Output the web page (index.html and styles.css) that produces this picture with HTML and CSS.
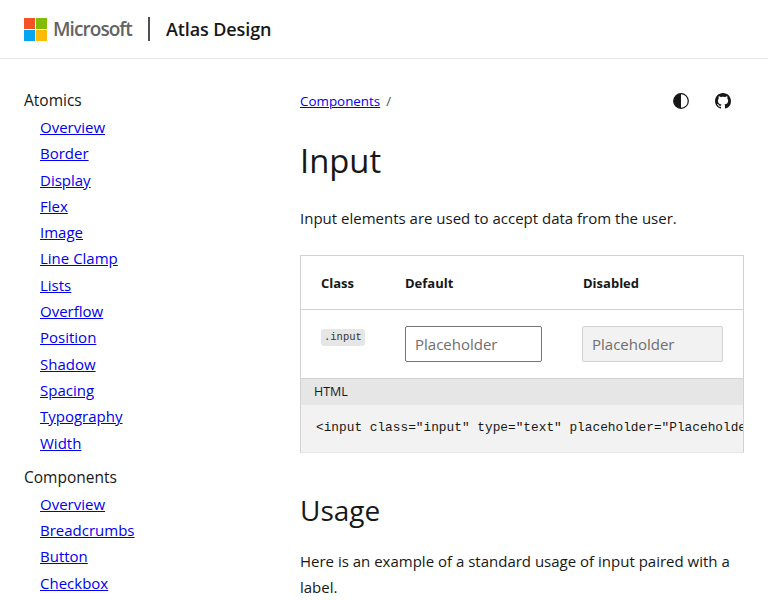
FILE: index.html
```html
<!DOCTYPE html>
<html>
<head>
    <meta charset="UTF-8">
    <title>Input - Atlas Design</title>
    <link rel="stylesheet" href="styles.css">
</head>
<body>
<header class="topBar">
    <svg class="msLogo" width="23" height="23" viewBox="0 0 23 23">
        <rect x="0" y="0" width="11" height="11" fill="#f35325"/>
        <rect x="12" y="0" width="11" height="11" fill="#81bc06"/>
        <rect x="0" y="12" width="11" height="11" fill="#05a6f0"/>
        <rect x="12" y="12" width="11" height="11" fill="#ffba08"/>
    </svg>
    <span class="msName">Microsoft</span>
    <span class="topDivider"></span>
    <span class="siteName">Atlas Design</span>
</header>
<div class="layout">
    <nav class="sideNav">
        <h4 class="navTitle">Atomics</h4>
        <ul class="navList">
            <li><a href="#">Overview</a></li>
            <li><a href="#">Border</a></li>
            <li><a href="#">Display</a></li>
            <li><a href="#">Flex</a></li>
            <li><a href="#">Image</a></li>
            <li><a href="#">Line Clamp</a></li>
            <li><a href="#">Lists</a></li>
            <li><a href="#">Overflow</a></li>
            <li><a href="#">Position</a></li>
            <li><a href="#">Shadow</a></li>
            <li><a href="#">Spacing</a></li>
            <li><a href="#">Typography</a></li>
            <li><a href="#">Width</a></li>
        </ul>
        <h4 class="navTitle">Components</h4>
        <ul class="navList">
            <li><a href="#">Overview</a></li>
            <li><a href="#">Breadcrumbs</a></li>
            <li><a href="#">Button</a></li>
            <li><a href="#">Checkbox</a></li>
        </ul>
    </nav>
    <main class="content">
        <div class="crumbRow">
            <div class="crumbs"><a href="#">Components</a><span class="crumbSep">/</span></div>
            <div class="crumbIcons">
                <svg width="16" height="16" viewBox="0 0 16 16">
                    <circle cx="8" cy="8" r="7.3" fill="none" stroke="#171717" stroke-width="1.2"/>
                    <path d="M8 0.7a7.3 7.3 0 0 0 0 14.6z" fill="#171717"/>
                </svg>
                <svg width="16" height="16" viewBox="0 0 16 16">
                    <path fill="#171717" d="M8 0C3.58 0 0 3.58 0 8c0 3.54 2.29 6.53 5.47 7.59.4.07.55-.17.55-.38 0-.19-.01-.82-.01-1.49-2.01.37-2.53-.49-2.69-.94-.09-.23-.48-.94-.82-1.13-.28-.15-.68-.52-.01-.53.63-.01 1.08.58 1.23.82.72 1.21 1.87.87 2.33.66.07-.52.28-.87.51-1.07-1.78-.2-3.64-.89-3.64-3.95 0-.87.31-1.59.82-2.15-.08-.2-.36-1.02.08-2.12 0 0 .67-.21 2.2.82.64-.18 1.32-.27 2-.27s1.36.09 2 .27c1.53-1.04 2.2-.82 2.2-.82.44 1.1.16 1.92.08 2.12.51.56.82 1.27.82 2.15 0 3.07-1.87 3.75-3.65 3.95.29.25.54.73.54 1.48 0 1.07-.01 1.93-.01 2.2 0 .21.15.46.55.38A8.01 8.01 0 0 0 16 8c0-4.42-3.58-8-8-8z"/>
                </svg>
            </div>
        </div>
        <h1 class="pageTitle">Input</h1>
        <p class="lead">Input elements are used to accept data from the user.</p>

        <div class="demoBox">
            <table class="demoTable">
                <tr>
                    <th class="colClass">Class</th>
                    <th class="colDefault">Default</th>
                    <th class="colDisabled">Disabled</th>
                </tr>
                <tr>
                    <td><code class="tag">.input</code></td>
                    <td><input class="input inputDefault" type="text" placeholder="Placeholder"></td>
                    <td><input class="input inputDisabled" type="text" placeholder="Placeholder" disabled></td>
                </tr>
            </table>
            <div class="codeHead">HTML</div>
            <pre class="codeBody">&lt;input class="input" type="text" placeholder="Placeholder"&gt;</pre>
        </div>

        <h2 class="subTitle">Usage</h2>
        <p class="lead">Here is an example of a standard usage of input paired with a label.</p>
    </main>
</div>
</body>
</html>
```

FILE: styles.css
```css
html, body {
    height: 600px;
    overflow: hidden;
}

body {
    margin: 0;
    font-family: "Open Sans", "Noto Sans", sans-serif;
    font-size: 15px;
    color: #171717;
    background-color: #fff;
}

a {
    color: #0000ee;
}

.topBar {
    display: flex;
    align-items: center;
    height: 58px;
    padding: 0 24px;
    border-bottom: 1px solid #e6e6e6;
}

.msLogo {
    margin-right: 6px;
}

.msName {
    font-size: 19px;
    font-weight: 600;
    letter-spacing: -0.93px;
    color: #636363;
}

.topDivider {
    width: 2px;
    height: 24px;
    margin: 0 16px;
    background-color: #505050;
}

.siteName {
    font-size: 18px;
    font-weight: 600;
    letter-spacing: -0.1px;
}

.layout {
    display: flex;
    padding: 0 24px;
}

.sideNav {
    flex: 0 0 276px;
    padding-top: 28px;
}

.navTitle {
    margin: 0;
    font-size: 15.5px;
    font-weight: 500;
    line-height: 27px;
}

.navList {
    margin: 0 0 8px;
    padding: 0 0 0 16px;
    list-style: none;
}

.navList li {
    line-height: 26.3px;
}

.content {
    flex: 1;
    min-width: 0;
    padding-top: 29px;
}

.crumbRow {
    display: flex;
    justify-content: space-between;
    align-items: center;
    height: 26px;
    font-size: 13.4px;
}

.crumbSep {
    margin-left: 6px;
    color: #505050;
}

.crumbIcons {
    display: flex;
    gap: 26px;
    margin-right: 13px;
}

.pageTitle {
    margin: 24px 0 0;
    font-size: 32.8px;
    font-weight: 400;
    line-height: 46px;
}

.lead {
    margin: 21px 0 0;
    line-height: 26px;
}

.demoBox {
    margin-top: 24px;
    border: 1px solid #d2d2d2;
    border-bottom-color: #e6e6e6;
    overflow: hidden;
}

.demoTable {
    border-collapse: collapse;
    table-layout: fixed;
    width: 100%;
}

.demoTable th {
    height: 53px;
    padding: 0 20px;
    font-size: 13px;
    font-weight: 700;
    text-align: left;
    border-bottom: 1px solid #d2d2d2;
}

.demoTable th.colClass {
    width: 44px;
}

.demoTable th.colDefault {
    width: 137px;
}

.demoTable th.colDisabled {
    padding-left: 21px;
}

.demoTable td {
    height: 68px;
    padding: 0 20px;
    vertical-align: middle;
    border-bottom: 1px solid #d2d2d2;
}

.demoTable td:first-child {
    vertical-align: top;
    padding-top: 14px;
    height: 54px;
}

.tag {
    display: inline-block;
    padding: 0 3px;
    font-family: "Liberation Mono", monospace;
    font-size: 10.5px;
    line-height: 17px;
    color: #333;
    background-color: #e6e6e6;
    border-radius: 3px;
}

.input {
    box-sizing: border-box;
    display: block;
    height: 36px;
    padding: 0 9px;
    font-family: inherit;
    font-size: 15px;
    border-radius: 2px;
}

.input::placeholder {
    color: #6e6e6e;
    opacity: 1;
}

.inputDefault {
    width: 137px;
    border: 1px solid #757575;
    background-color: #fff;
}

.inputDisabled {
    width: 141px;
    border: 1px solid #d2d2d2;
    background-color: #f2f2f2;
}

.codeHead {
    height: 26px;
    padding-left: 13px;
    font-size: 12.5px;
    line-height: 26px;
    background-color: #e6e6e6;
}

.codeBody {
    height: 47px;
    margin: 0;
    padding: 0 0 0 15px;
    font-family: "Liberation Mono", monospace;
    font-size: 12.8px;
    line-height: 46px;
    background-color: #f2f2f2;
    overflow: hidden;
}

.subTitle {
    margin: 38px 0 0;
    font-size: 28px;
    font-weight: 400;
    line-height: 38px;
}

.subTitle + .lead {
    margin-top: 19px;
}
```
